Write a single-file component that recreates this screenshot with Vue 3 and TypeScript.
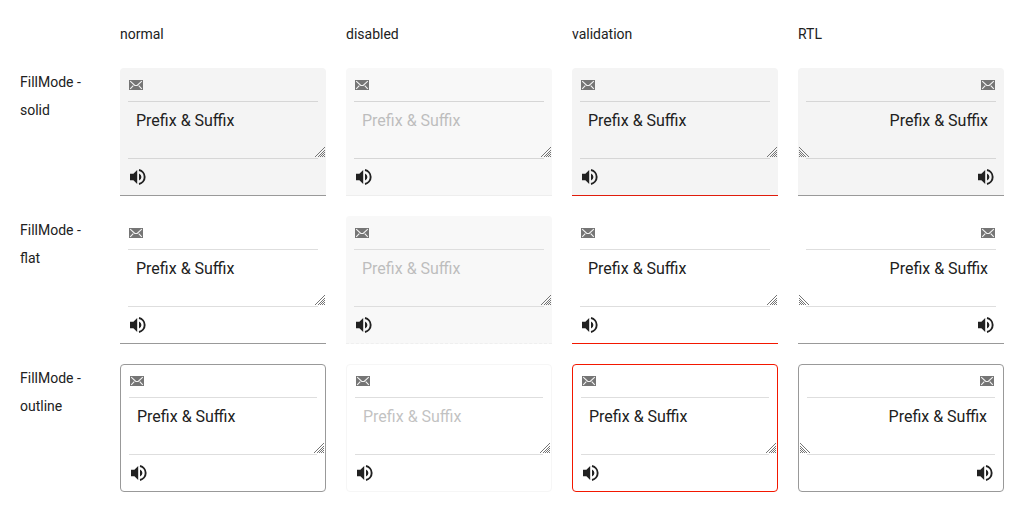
<script setup lang="ts">
const cols = ['normal', 'disabled', 'validation', 'rtl']
const modes = ['solid', 'flat', 'outline']
</script>

<template>
  <div class="page">
    <div class="row head">
      <span></span><span>normal</span><span>disabled</span><span>validation</span><span>RTL</span>
    </div>
    <div v-for="m in modes" :key="m" class="row">
      <div class="label">FillMode -<br />{{ m }}</div>
      <div v-for="c in cols" :key="c" class="area" :class="[m, c]" :dir="c === 'rtl' ? 'rtl' : 'ltr'">
        <div class="prefix">
          <svg class="mail" width="16" height="16" viewBox="0 0 16 16">
            <path d="M1 3h14v10H1z" fill="#757575" />
            <path d="M2.200 4.200L6.800 8.500h2.400L13.800 4.200M2.200 11.800L5.300 8.700M13.800 11.800L10.700 8.700" fill="none" stroke="#f4f4f4" stroke-width="1.100" />
          </svg>
        </div>
        <div class="body">
          <span class="text">Prefix &amp; Suffix</span>
          <svg class="grip" width="10" height="10" viewBox="0 0 10 10">
            <path d="M0 10L10 0M3 10L10 3M5 10L10 5M7 10L10 7M9 10L10 9" fill="none" stroke="#757575" stroke-width="1" />
          </svg>
        </div>
        <div class="suffix">
          <svg class="sound" width="16" height="16" viewBox="0 0 16 16">
            <path fill="#212121" d="M0 4.800v6.400h3.400L7.200 15V1L3.400 4.800zM9 4.400a3.900 3.900 0 0 1 0 7.200z" />
            <path fill="none" stroke="#212121" stroke-width="1.900" d="M9 1.050a7.100 7.100 0 0 1 0 13.900" />
          </svg>
        </div>
      </div>
    </div>
  </div>
</template>

<style>
body { margin: 0; background: #fff; }
</style>
<style scoped>
.page { box-sizing: border-box; width: 1024px; height: 512px; padding: 20px; font: 14px/28px Roboto, sans-serif; color: #212121; display: flex; flex-direction: column; gap: 20px; }
.row { display: grid; grid-template-columns: 80px repeat(4, 206px); gap: 20px; height: 128px; }
.head { height: 28px; }
.area { box-sizing: border-box; height: 128px; border-bottom: 1px solid #999; border-radius: 4px 4px 0 0; display: flex; flex-direction: column; }
.solid { background: #f4f4f4; }
.prefix { box-sizing: border-box; height: 34px; margin: 0 8px; padding: 9px 0 0; border-bottom: 1px solid #d6d6d6; line-height: 0; }
.body { box-sizing: border-box; height: 57px; padding: 5px 16px; font-size: 16px; position: relative; }
.body::after { content: ''; position: absolute; left: 8px; right: 8px; bottom: 0; height: 1px; background: #d6d6d6; }
.flat .prefix, .outline .prefix { border-bottom-color: #dedede; }
.flat .body::after, .outline .body::after { background: #dedede; }
.grip { position: absolute; right: 1px; bottom: 2px; }
.rtl .grip { right: auto; left: 1px; transform: scaleX(-1); }
.suffix { padding: 10px; line-height: 0; }
.validation { border-bottom-color: #f31700; }
.solid.validation { border-bottom-color: #e01c0c; }
.disabled { background: #f8f8f8; border-bottom: 1px solid #eee; }
.flat.disabled { border-bottom: 1px dashed #efefef; }
.disabled .text { opacity: .27; }
.outline { background: #fff; border: 1px solid #999; border-radius: 4px; }
.outline .prefix { height: 33px; padding-top: 8px; }
.outline.disabled { border-color: #f6f6f6; }
.outline.validation { border-color: #f31700; }
</style>
